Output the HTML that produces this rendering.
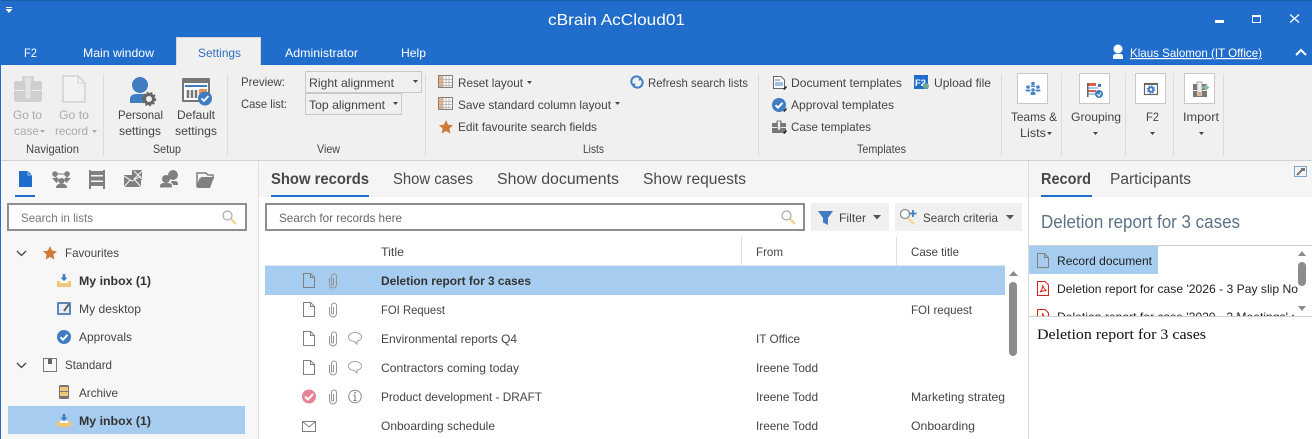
<!DOCTYPE html>
<html><head><meta charset="utf-8"><title>cBrain AcCloud01</title>
<style>
html,body{margin:0;padding:0;width:1312px;height:439px;overflow:hidden;background:#fff}
svg{display:block}
text{font-family:"Liberation Sans",sans-serif;font-size:12px;fill:#444;white-space:pre}
.w{fill:#fff}.g{fill:#a9a9a9}.b{font-weight:bold;fill:#333}.t{font-size:15.5px;fill:#4a4a4a}
.h{font-size:15.5px;font-weight:bold;fill:#484848}
</style></head><body>
<svg width="1312" height="439" viewBox="0 0 1312 439" xmlns="http://www.w3.org/2000/svg">
<defs>
<g id="doc"><path d="M.5.5H7.5L11.5 4.5V14.5H.5Z M7.5.5V4.5H11.5" fill="none" stroke="#808080" stroke-width="1"/></g>
<g id="clip"><path d="M1 5V11.500a3.500 3.500 0 0 0 7 0V3.500a2.500 2.500 0 0 0-5 0V11a1 1 0 0 0 2 0V5" fill="none" stroke="#949494" stroke-width="1"/></g>
<g id="bub"><path d="M7 .5C3.400.5.5 2.400.5 5S3 9.300 6 9.500L9 12 9 9.200C11.600 8.700 13.500 7.100 13.500 5 13.500 2.400 10.600.5 7 .5Z" fill="none" stroke="#a0a0a0" stroke-width="1"/></g>
<g id="inbox"><rect x="0" y="7" width="14" height="6" fill="#f0c777"/><rect x="3" y="7" width="8" height="2" fill="#fff"/><path d="M5.700 0H8.300V3.500H10.500L7 7 3.500 3.500H5.700Z" fill="#3f7cc2"/></g>
<g id="mag"><circle cx="5.500" cy="5.500" r="4.500" fill="#fff" stroke="#aaa" stroke-width="1.200"/><path d="M9 9L14 14" stroke="#f4d595" stroke-width="2.500"/></g>
<g id="grid"><rect x=".5" y=".5" width="14" height="12" fill="#fff" stroke="#808080"/><rect x="1" y="1" width="4" height="11" fill="#f3b27c"/><path d="M1 4.500H14M1 7.500H14M1 10.500H14M5 1V12M8 1V12M11 1V12" stroke="#aaa" stroke-width=".8"/></g>
<g id="chk"><circle cx="7" cy="7" r="7" fill="#3f7cc2"/><path d="M3.500 7.200L6 9.700 10.500 4.800" fill="none" stroke="#fff" stroke-width="2"/></g>
<g id="star"><path d="M7 0L9.100 4.600 14 5.200 10.400 8.500 11.400 13.500 7 11 2.600 13.500 3.600 8.500 0 5.200 4.900 4.600Z" fill="#d07a35"/></g>
<g id="wr"><path d="M0 4L3 1 4 2 1.500 5Z" fill="#222"/></g>
<g id="case"><path d="M5 3V1H9V3" fill="none" stroke="#777"/><rect x="0" y="3" width="14" height="10" rx="1" fill="#777"/><rect x="0" y="7" width="14" height="1" fill="#eee"/><rect x="5.500" y="1" width="3" height="9" fill="#f0f0f0" stroke="#777" stroke-width=".7"/></g>
<path id="tri" d="M0 0H5L2.500 3Z" fill="#444"/>
<path id="trig" d="M0 0H5L2.500 3Z" fill="#aaa"/>
<path id="chev" d="M0 0L4.500 4.500 9 0" fill="none" stroke="#444" stroke-width="1.300"/>
<g id="pdf"><path d="M.5.500H8L11.500 4V14.500H.5Z" fill="#fff" stroke="#e02020"/><path d="M3 11C5 9 6 6 5.500 4 6.500 7 7.500 9 9.500 9.500 7 9.500 5 10 3 11Z" fill="none" stroke="#e02020" stroke-width="1"/></g>
</defs>

<!-- header -->
<rect width="1312" height="65" fill="#206dcb"/>
<rect width="1312" height="1" fill="#1b5cab"/>
<path d="M6 7.500H12" stroke="#fff"/><path d="M5.500 9H12.500L9 13Z" fill="#fff"/>
<text class="w" x="548" y="25" style="font-size:16px" textLength="137" lengthAdjust="spacingAndGlyphs">cBrain AcCloud01</text>
<rect x="1215" y="20" width="9" height="3" fill="#fff"/>
<rect x="1252.500" y="15.500" width="8" height="7" fill="none" stroke="#fff" stroke-width="1"/><rect x="1252" y="15" width="9" height="2" fill="#fff"/>
<path d="M1290 14.500L1299 22.500M1299 14.500L1290 22.500" stroke="#fff" stroke-width="1.300"/>
<rect x="176" y="37" width="85" height="28" fill="#f0f0f0"/>
<path d="M176.500 65V37.500H260.500V65" fill="none" stroke="#d5d5d5"/>
<text class="w" x="24" y="57" textLength="13" lengthAdjust="spacingAndGlyphs">F2</text>
<text class="w" x="83" y="57" textLength="71" lengthAdjust="spacingAndGlyphs">Main window</text>
<text x="198" y="57" textLength="43" lengthAdjust="spacingAndGlyphs" style="fill:#2f6fc4">Settings</text>
<text class="w" x="285" y="57" textLength="73" lengthAdjust="spacingAndGlyphs">Administrator</text>
<text class="w" x="401" y="57" textLength="25" lengthAdjust="spacingAndGlyphs">Help</text>
<circle cx="1118" cy="49" r="4.500" fill="#fff"/><path d="M1113 59V56.500Q1113 54 1116 54H1120Q1123 54 1123 56.500V59Z" fill="#fff"/>
<text class="w" x="1130" y="57" textLength="132" lengthAdjust="spacingAndGlyphs" text-decoration="underline">Klaus Salomon (IT Office)</text>
<path d="M1296 55L1301 50 1306 55" fill="none" stroke="#fff" stroke-width="2"/>

<!-- ribbon -->
<rect y="65" width="1312" height="95" fill="#f0f0f0"/>
<rect y="160" width="1312" height="1" fill="#d2d2d2"/>
<rect x="0" y="0" width="1" height="439" fill="#206dcb"/>
<g fill="#dcdcdc">
<rect x="103" y="74" width="1" height="82"/><rect x="227" y="74" width="1" height="82"/><rect x="425" y="74" width="1" height="82"/><rect x="758" y="74" width="1" height="82"/><rect x="1001" y="74" width="1" height="82"/><rect x="1061" y="74" width="1" height="82"/><rect x="1125" y="74" width="1" height="82"/><rect x="1173" y="74" width="1" height="82"/><rect x="1223" y="74" width="1" height="82"/>
</g>
<!-- navigation -->
<path d="M23 81V77H33V81" fill="none" stroke="#ccc" stroke-width="1.500"/>
<rect x="14" y="81" width="28" height="21" rx="2" fill="#cfcfcf"/><rect x="14" y="90" width="28" height="1" fill="#f0f0f0"/>
<rect x="25" y="77" width="6" height="22" fill="#e4e4e4" stroke="#cfcfcf"/>
<path d="M63 76H78L85 83V102H63Z" fill="#f2f2f2" stroke="#d2d2d2" stroke-width="1.500"/><path d="M78 76V83H85" fill="none" stroke="#d2d2d2"/>
<text class="g" x="13" y="119" textLength="29" lengthAdjust="spacingAndGlyphs">Go to</text>
<text class="g" x="14" y="135" textLength="25" lengthAdjust="spacingAndGlyphs">case</text><use href="#trig" x="40" y="130"/>
<text class="g" x="59" y="119" textLength="30" lengthAdjust="spacingAndGlyphs">Go to</text>
<text class="g" x="55" y="135" textLength="33" lengthAdjust="spacingAndGlyphs">record</text><use href="#trig" x="92" y="130"/>
<text x="26" y="153" textLength="53" lengthAdjust="spacingAndGlyphs">Navigation</text>
<!-- setup -->
<circle cx="140" cy="85" r="8" fill="#3f7cc2"/><path d="M130 103V99Q130 94 137 94H145Q148 95 149 97L142 103Z" fill="#3f7cc2"/>
<circle cx="149" cy="99" r="4.500" fill="#f0f0f0" stroke="#666" stroke-width="3"/><circle cx="149" cy="99" r="6.500" fill="none" stroke="#666" stroke-width="1.500" stroke-dasharray="2 2"/>
<rect x="182" y="78" width="28" height="24" rx="1" fill="#777"/><rect x="184" y="83" width="24" height="17" fill="#fff"/><rect x="185" y="85" width="22" height="2" fill="#3f7cc2"/><path d="M188 90V98M192 90V98M196 90V98" stroke="#777" stroke-width="2.500"/><rect x="199" y="89" width="8" height="6" fill="#e8935a"/>
<circle cx="205" cy="98.500" r="7" fill="#3f7cc2"/><path d="M201.500 98.500L204 101 208.500 96" fill="none" stroke="#fff" stroke-width="1.800"/>
<text x="118" y="119" textLength="45" lengthAdjust="spacingAndGlyphs">Personal</text>
<text x="119" y="135" textLength="42" lengthAdjust="spacingAndGlyphs">settings</text>
<text x="177" y="119" textLength="38" lengthAdjust="spacingAndGlyphs">Default</text>
<text x="175" y="135" textLength="42" lengthAdjust="spacingAndGlyphs">settings</text>
<text x="153" y="153" textLength="28" lengthAdjust="spacingAndGlyphs">Setup</text>
<!-- view -->
<text x="241" y="86" textLength="44" lengthAdjust="spacingAndGlyphs">Preview:</text>
<text x="241" y="108" textLength="46" lengthAdjust="spacingAndGlyphs">Case list:</text>
<rect x="305.500" y="71.500" width="116" height="21" fill="#f0f0f0" stroke="#c8c8c8"/>
<rect x="305.500" y="93.500" width="96" height="21" fill="#f0f0f0" stroke="#c8c8c8"/>
<text x="309" y="87" textLength="85" lengthAdjust="spacingAndGlyphs">Right alignment</text>
<text x="309" y="109" textLength="76" lengthAdjust="spacingAndGlyphs">Top alignment</text>
<use href="#tri" x="413" y="80"/><use href="#tri" x="393" y="102"/>
<text x="317" y="153" textLength="23" lengthAdjust="spacingAndGlyphs">View</text>
<!-- lists -->
<use href="#grid" x="438" y="75"/><use href="#grid" x="438" y="97"/><use href="#star" x="439" y="120"/>
<text x="458" y="87" textLength="65" lengthAdjust="spacingAndGlyphs">Reset layout</text><use href="#tri" x="527" y="81"/>
<text x="458" y="109" textLength="153" lengthAdjust="spacingAndGlyphs">Save standard column layout</text><use href="#tri" x="615" y="102"/>
<text x="458" y="131" textLength="139" lengthAdjust="spacingAndGlyphs">Edit favourite search fields</text>
<path d="M632 84A5 5 0 0 1 641 79M642 80A5 5 0 0 1 633 85" fill="none" stroke="#3f7cc2" stroke-width="2"/><path d="M640 76L643 80 638.500 80.500Z M634 88L631 84 635.500 83.500Z" fill="#3f7cc2"/>
<text x="648" y="87" textLength="100" lengthAdjust="spacingAndGlyphs">Refresh search lists</text>
<text x="583" y="153" textLength="21" lengthAdjust="spacingAndGlyphs">Lists</text>
<!-- templates -->
<path d="M773.500 76.500H781L784.500 80V88.500H773.500Z" fill="#fff" stroke="#666"/><path d="M775 80H780M775 83H783M775 85H783" stroke="#3f7cc2"/><use href="#wr" x="783" y="85"/>
<use href="#chk" x="772" y="98"/><use href="#wr" x="783" y="107"/>
<use href="#case" x="772" y="120"/><use href="#wr" x="783" y="129"/>
<text x="791" y="87" textLength="111" lengthAdjust="spacingAndGlyphs">Document templates</text>
<text x="791" y="109" textLength="103" lengthAdjust="spacingAndGlyphs">Approval templates</text>
<text x="791" y="131" textLength="80" lengthAdjust="spacingAndGlyphs">Case templates</text>
<text x="857" y="153" textLength="49" lengthAdjust="spacingAndGlyphs">Templates</text>
<rect x="914" y="75" width="14" height="14" fill="#206dcb"/><text class="w" x="915" y="86" style="font-size:9px;font-weight:bold" textLength="11" lengthAdjust="spacingAndGlyphs">F2</text><circle cx="926" cy="86" r="3" fill="#6bab8b"/>
<text x="934" y="87" textLength="57" lengthAdjust="spacingAndGlyphs">Upload file</text>
<!-- big buttons -->
<g fill="#fff" stroke="#c8c8c8"><rect x="1017.500" y="73.500" width="30" height="30"/><rect x="1079.500" y="73.500" width="30" height="30"/><rect x="1135.500" y="73.500" width="30" height="30"/><rect x="1184.500" y="73.500" width="30" height="30"/></g>
<g fill="#4a83c4"><circle cx="1033" cy="83.500" r="1.800"/><circle cx="1028" cy="87" r="1.800"/><circle cx="1038" cy="87" r="1.800"/><circle cx="1033" cy="90" r="1.800"/><rect x="1025.500" y="89.500" width="5" height="2" rx="1"/><rect x="1035.500" y="89.500" width="5" height="2" rx="1"/><rect x="1030.500" y="92" width="5" height="3" rx="1"/><rect x="1031" y="85.500" width="4" height="1.500"/></g>
<rect x="1088" y="83" width="8" height="3" fill="#d9604a"/><rect x="1088" y="87" width="10" height="2" fill="#a9c8e8"/><rect x="1088" y="90" width="8" height="2" fill="#d9604a"/><rect x="1088" y="93" width="8" height="2" fill="#a9c8e8"/><rect x="1087" y="83" width="1.500" height="14" fill="#666"/><rect x="1098" y="84" width="3" height="3" fill="#3f7cc2"/><circle cx="1099" cy="94" r="4" fill="#3f7cc2"/><path d="M1097 94L1099 96 1101 92.500" fill="none" stroke="#fff"/>
<rect x="1144.500" y="83.500" width="13" height="11" fill="#fff" stroke="#666" stroke-width="1.200"/><rect x="1144" y="83" width="14" height="2" fill="#666"/><circle cx="1151" cy="89.500" r="2.300" fill="none" stroke="#3f7cc2" stroke-width="2"/><circle cx="1151" cy="89.500" r="3.800" fill="none" stroke="#3f7cc2" stroke-width="1" stroke-dasharray="1.500 1.500"/>
<rect x="1193" y="84" width="14" height="13" fill="#777"/><rect x="1193" y="90" width="14" height="1" fill="#f0f0f0"/><rect x="1197" y="82" width="5" height="14" fill="#eee" stroke="#888" stroke-width=".7"/><rect x="1198" y="92" width="3" height="3" fill="#e8a86a"/><path d="M1202 87.500H1208M1205 85L1208 87.500 1205 90" stroke="#8fbfa8" stroke-width="2" fill="none"/>
<text x="1011" y="121" textLength="46" lengthAdjust="spacingAndGlyphs">Teams &amp;</text>
<text x="1020" y="137" textLength="26" lengthAdjust="spacingAndGlyphs">Lists</text><use href="#tri" x="1047" y="132"/>
<text x="1071" y="121" textLength="50" lengthAdjust="spacingAndGlyphs">Grouping</text><use href="#tri" x="1093" y="132"/>
<text x="1146" y="121" textLength="13" lengthAdjust="spacingAndGlyphs">F2</text><use href="#tri" x="1150" y="132"/>
<text x="1183" y="121" textLength="36" lengthAdjust="spacingAndGlyphs">Import</text><use href="#tri" x="1199" y="132"/>

<!-- left panel -->
<rect x="1" y="161" width="257" height="278" fill="#f7f7f7"/>
<rect x="258" y="161" width="1" height="278" fill="#e2e2e2"/>
<path d="M19 171H28L32 175V187H19Z" fill="#206dcb"/><path d="M28 171V175H32" fill="none" stroke="#a8c8ee"/>
<rect x="15" y="195" width="20" height="2" fill="#206dcb"/>
<g fill="#808080">
<path d="M56 174H67M55 176L60 182M68 176L63 182" stroke="#808080" fill="none"/>
<circle cx="55" cy="174" r="2.800"/><circle cx="67" cy="174" r="2.800"/><circle cx="61.500" cy="181" r="3"/>
<path d="M52 178H58.500L58 181 56.500 183Z M71 178H64.500L65 181 66.500 183Z"/><path d="M56 188Q56 184 60 184H63Q67 184 67 188Z"/>
<rect x="89" y="170" width="2" height="19"/><rect x="103" y="170" width="2" height="19"/><rect x="91" y="171" width="12" height="4"/><rect x="91" y="176.500" width="12" height="4"/><rect x="91" y="182" width="12" height="4"/>
<path d="M124 175H141V187H124Z M132 170H142V180H132Z"/>
<path d="M134 171L142 179M142 171L134 179M124 176L132 181 141 176M124 187L130 180M141 187L135 180" stroke="#f7f7f7" fill="none"/>
<circle cx="173" cy="175" r="5"/><circle cx="166" cy="179" r="4"/><path d="M160 187.500V186Q160 183 164 183H168Q172 183 172 186V187.500Z M172 181H175Q178 181 178 184V185H173Q172.500 183 170.500 182Z"/>
<path d="M197 173H206L208 175H213V179H200L197 187Z" fill="none" stroke="#808080" stroke-width="1.500"/>
<path d="M201 177H214L210 188H197Z"/>
</g>
<rect x="8" y="204" width="238" height="26" fill="#fff" stroke="#8e8e8e" stroke-width="2"/>
<text x="21" y="222" textLength="72" lengthAdjust="spacingAndGlyphs" style="fill:#777">Search in lists</text>
<use href="#mag" x="222" y="210"/>
<use href="#chev" x="17" y="251"/><use href="#star" x="43" y="246"/>
<text x="65" y="257" textLength="54" lengthAdjust="spacingAndGlyphs">Favourites</text>
<use href="#inbox" x="57" y="274"/>
<text class="b" x="79" y="285" textLength="72" lengthAdjust="spacingAndGlyphs">My inbox (1)</text>
<rect x="57" y="302" width="14" height="13" rx="1" fill="#5b87b5"/><rect x="59" y="304" width="10" height="9" fill="#e8eef5"/><path d="M64 311L69 304" stroke="#666" stroke-width="2"/>
<text x="79" y="313" textLength="62" lengthAdjust="spacingAndGlyphs">My desktop</text>
<use href="#chk" x="57" y="330"/>
<text x="79" y="341" textLength="53" lengthAdjust="spacingAndGlyphs">Approvals</text>
<use href="#chev" x="17" y="363"/>
<rect x="43.500" y="358.500" width="13" height="13" fill="none" stroke="#777"/><rect x="48" y="359" width="4" height="5" fill="#666"/>
<text x="65" y="369" textLength="47" lengthAdjust="spacingAndGlyphs">Standard</text>
<rect x="59" y="385" width="10" height="14" rx="1" fill="#777"/><rect x="60" y="387" width="8" height="4" fill="#f0c777"/><rect x="60" y="392" width="8" height="4" fill="#f0c777"/>
<text x="79" y="397" textLength="39" lengthAdjust="spacingAndGlyphs">Archive</text>
<rect x="8" y="406" width="237" height="28" fill="#a6cdf0"/>
<use href="#inbox" x="57" y="414"/>
<text class="b" x="79" y="425" textLength="72" lengthAdjust="spacingAndGlyphs">My inbox (1)</text>

<!-- middle -->
<rect x="259" y="161" width="769" height="36" fill="#f5f5f5"/>
<text class="h" x="271" y="184" textLength="98" lengthAdjust="spacingAndGlyphs">Show records</text>
<rect x="271" y="195" width="98" height="2" fill="#206dcb"/>
<text class="t" x="393" y="184" textLength="80" lengthAdjust="spacingAndGlyphs">Show cases</text>
<text class="t" x="497" y="184" textLength="122" lengthAdjust="spacingAndGlyphs">Show documents</text>
<text class="t" x="643" y="184" textLength="103" lengthAdjust="spacingAndGlyphs">Show requests</text>
<rect x="266" y="204" width="538" height="26" fill="#fff" stroke="#8e8e8e" stroke-width="2"/>
<text x="279" y="222" textLength="123" lengthAdjust="spacingAndGlyphs" style="fill:#666">Search for records here</text>
<use href="#mag" x="781" y="210"/>
<rect x="811" y="203" width="78" height="28" fill="#f0f0f0"/>
<path d="M818 211H833L828 218V225L823 222.500V218Z" fill="#3f7cc2"/>
<text x="839" y="222" textLength="27" lengthAdjust="spacingAndGlyphs">Filter</text>
<path d="M873 215H881L877 219.500Z" fill="#555"/>
<rect x="895" y="203" width="127" height="28" fill="#f0f0f0"/>
<circle cx="905" cy="214" r="4.500" fill="#fff" stroke="#8a8a8a" stroke-width="1.200"/><path d="M908 218L914 224" stroke="#f4d595" stroke-width="2.500"/><path d="M913 210V217M909.500 213.500H916.500" stroke="#3f7cc2" stroke-width="1.800"/>
<text x="923" y="222" textLength="75" lengthAdjust="spacingAndGlyphs">Search criteria</text>
<path d="M1006 215H1014L1010 219.500Z" fill="#555"/>
<rect x="741" y="237" width="1" height="28" fill="#e0e0e0"/><rect x="896" y="237" width="1" height="28" fill="#e0e0e0"/>
<rect x="265" y="265" width="740" height="1" fill="#dfe5ea"/>
<text x="381" y="256" textLength="23" lengthAdjust="spacingAndGlyphs">Title</text>
<text x="756" y="256" textLength="27" lengthAdjust="spacingAndGlyphs">From</text>
<text x="911" y="256" textLength="48" lengthAdjust="spacingAndGlyphs">Case title</text>
<rect x="265" y="266" width="740" height="29" fill="#a6cdf0"/>
<path d="M1009 276L1013.500 271 1018 276Z" fill="#8a8a8a"/>
<rect x="1009" y="282" width="8" height="74" rx="4" fill="#8c8c8c"/>

<use href="#doc" x="303" y="273"/><use href="#clip" x="328.500" y="273"/>
<text class="b" x="381" y="285" textLength="150" lengthAdjust="spacingAndGlyphs">Deletion report for 3 cases</text>
<use href="#doc" x="303" y="302"/><use href="#clip" x="328.500" y="302"/>
<text x="381" y="314" textLength="64" lengthAdjust="spacingAndGlyphs">FOI Request</text>
<text x="911" y="314" textLength="61" lengthAdjust="spacingAndGlyphs">FOI request</text>
<use href="#doc" x="303" y="331"/><use href="#clip" x="328.500" y="331"/><use href="#bub" x="348" y="332"/>
<text x="381" y="343" textLength="136" lengthAdjust="spacingAndGlyphs">Environmental reports Q4</text>
<text x="756" y="343" textLength="44" lengthAdjust="spacingAndGlyphs">IT Office</text>
<use href="#doc" x="303" y="360"/><use href="#clip" x="328.500" y="360"/><use href="#bub" x="348" y="361"/>
<text x="381" y="372" textLength="138" lengthAdjust="spacingAndGlyphs">Contractors coming today</text>
<text x="756" y="372" textLength="62" lengthAdjust="spacingAndGlyphs">Ireene Todd</text>
<circle cx="309" cy="396.500" r="7" fill="#e58397"/><path d="M305 396.500L308 399.500 313 394" fill="none" stroke="#fff" stroke-width="2"/>
<use href="#clip" x="328.500" y="389"/>
<circle cx="355" cy="396.500" r="6.300" fill="none" stroke="#888"/><path d="M355 395V400.500M353.500 400.500H356.500M353.500 395H355" stroke="#777" stroke-width="1"/><rect x="354.300" y="392" width="1.500" height="1.500" fill="#777"/>
<text x="381" y="401" textLength="161" lengthAdjust="spacingAndGlyphs">Product development - DRAFT</text>
<text x="756" y="401" textLength="62" lengthAdjust="spacingAndGlyphs">Ireene Todd</text>
<text x="911" y="401" textLength="94" lengthAdjust="spacingAndGlyphs">Marketing strateg</text>
<path d="M302.500 421.500H315.500V431.500H302.500Z M302.500 421.500L309 427 315.500 421.500" fill="none" stroke="#808080"/>
<text x="381" y="430" textLength="114" lengthAdjust="spacingAndGlyphs">Onboarding schedule</text>
<text x="756" y="430" textLength="62" lengthAdjust="spacingAndGlyphs">Ireene Todd</text>
<text x="911" y="430" textLength="64" lengthAdjust="spacingAndGlyphs">Onboarding</text>

<!-- right -->
<rect x="1028" y="161" width="1" height="278" fill="#dcdcdc"/>
<rect x="1029" y="161" width="283" height="36" fill="#f5f5f5"/>
<text class="h" x="1041" y="184" textLength="50" lengthAdjust="spacingAndGlyphs">Record</text>
<rect x="1041" y="195" width="51" height="2" fill="#206dcb"/>
<text class="t" x="1110" y="184" textLength="81" lengthAdjust="spacingAndGlyphs">Participants</text>
<rect x="1294.500" y="166.500" width="12" height="10" fill="#f5f5f5" stroke="#7aa5d5"/><path d="M1297 175L1302 170" stroke="#777" stroke-width="2"/><rect x="1301" y="168" width="4" height="3" fill="#777"/>
<text x="1041" y="228" style="font-size:18px;fill:#5c7285" textLength="199" lengthAdjust="spacingAndGlyphs">Deletion report for 3 cases</text>
<rect x="1029" y="245" width="283" height="1" fill="#cfcfcf"/>
<rect x="1029" y="246" width="129" height="28" fill="#a6cdf0"/>
<use href="#doc" x="1037" y="253"/>
<text x="1057" y="265" style="fill:#222" textLength="95" lengthAdjust="spacingAndGlyphs">Record document</text>
<use href="#pdf" x="1037" y="281"/>
<text x="1057" y="293" style="fill:#222" textLength="241" lengthAdjust="spacingAndGlyphs">Deletion report for case '2026 - 3 Pay slip No</text>
<svg x="1029" y="300" width="265" height="16" viewBox="1029 300 265 16">
<use href="#pdf" x="1037" y="309"/>
<text x="1057" y="321" style="fill:#222" textLength="241" lengthAdjust="spacingAndGlyphs">Deletion report for case '2020 - 2 Meetings' a</text>
</svg>
<path d="M1298 256L1302 251 1306 256Z" fill="#8a8a8a"/>
<rect x="1298" y="262" width="8" height="24" rx="4" fill="#8c8c8c"/>
<path d="M1298 306L1302 311 1306 306Z" fill="#8a8a8a"/>
<rect x="1029" y="316" width="283" height="1" fill="#cfcfcf"/>
<text x="1037" y="339" style="font-family:'Liberation Serif',serif;font-size:15px;fill:#111" textLength="169" lengthAdjust="spacingAndGlyphs">Deletion report for 3 cases</text>
</svg>
</body></html>
